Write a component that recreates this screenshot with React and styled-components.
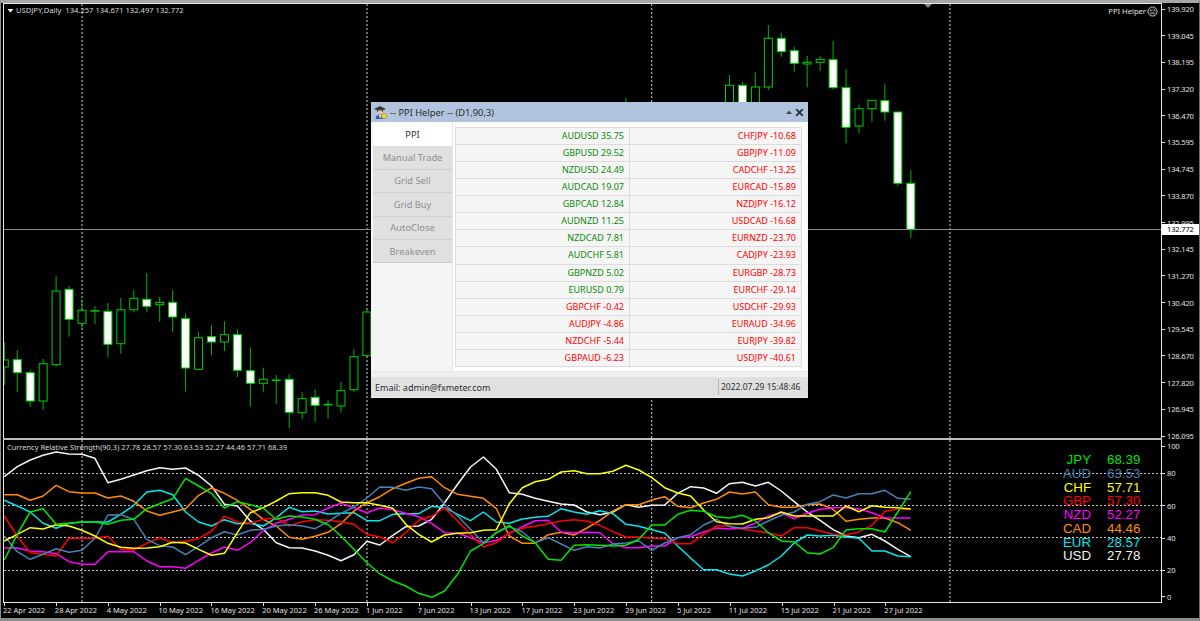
import React from "react";
import styled, { createGlobalStyle } from "styled-components";

const Global = createGlobalStyle`
  html, body { margin: 0; padding: 0; background: #000; }
  #root { width: 1200px; height: 621px; overflow: hidden; }
`;

const SMALL_FONT = `"Noto Sans", "Liberation Sans", sans-serif`;

const Terminal = styled.div`
  position: relative;
  width: 1200px;
  height: 621px;
  box-sizing: border-box;
  background: #000;
  border-top: 3px solid #a6a6a6;
  border-bottom: 3px solid #8c8c8c;
  border-left: 1px solid #8c8c8c;
  border-right: 1px solid #6e6e6e;
  padding: 1px 0 0 2px;
  display: flex;
  flex-direction: column;
  font-family: ${SMALL_FONT};
  color: #d8d8d8;
`;
const MainPane = styled.div`
  display: flex;
  height: 434px;
  flex: none;
`;
const Plot = styled.div`
  position: relative;
  width: 1157px;
  flex: none;
  box-sizing: content-box;
  border-left: 1px solid #e8e8e8;
  border-right: 1px solid #e8e8e8;
  border-top: 1px solid #e8e8e8;
  margin-top: -1px;
  overflow: hidden;
  & > svg { display: block; width: 100%; height: 100%; }
`;
const PriceAxis = styled.div`
  flex: 1;
  display: flex;
  flex-direction: column;
  justify-content: space-between;
  margin: 0 0 -3px 0;
  position: relative;
`;
const AxisLabel = styled.div`
  display: flex;
  align-items: center;
  height: 10px;
  font-size: 7.6px;
  letter-spacing: -0.2px;
  line-height: 10px;
  color: #e0e0e0;
  white-space: nowrap;
  &::before {
    content: "";
    width: 3px;
    height: 1px;
    background: #e0e0e0;
    margin-right: 2px;
    flex: none;
  }
`;
const PriceBadge = styled.div`
  position: absolute;
  left: 0;
  top: 220px;
  width: 37px;
  height: 11px;
  padding-left: 5px;
  box-sizing: border-box;
  background: #fff;
  color: #000;
  font-size: 7.6px;
  letter-spacing: -0.2px;
  line-height: 11px;
`;
const ChartCaption = styled.div`
  position: absolute;
  left: 3px;
  top: 1px;
  font-size: 7.6px;
  line-height: 11px;
  color: #d8d8d8;
  white-space: pre;
  display: flex;
  align-items: center;
  gap: 2px;
`;
const SubCaption = styled(ChartCaption)`
  left: 3px;
  top: 2px;
  font-size: 7.45px;
`;
const Badge = styled.div`
  position: absolute;
  right: 3px;
  top: 2px;
  display: flex;
  align-items: center;
  gap: 1px;
  font-size: 7.6px;
  line-height: 11px;
  color: #e0e0e0;
`;
const ShiftMark = styled.div`
  position: absolute;
  left: 920px;
  top: 0;
  width: 0;
  height: 0;
  border-left: 4px solid transparent;
  border-right: 4px solid transparent;
  border-top: 4px solid #7d8a99;
`;
const PaneGap = styled.div`
  height: 2px;
  flex: none;
  background: #bdbdbd;
  margin-right: 37px;
`;
const SubPane = styled.div`
  display: flex;
  height: 163px;
  flex: none;
`;
const SubPlot = styled(Plot)`
  border-top: none;
  border-bottom: 1px solid #e8e8e8;
  margin-top: 0;
  height: 162px;
`;
const SubAxis = styled.div`
  flex: 1;
  display: flex;
  flex-direction: column;
`;
const SubLabel = styled(AxisLabel)`
  margin-top: ${(p) => p.$gap}px;
`;
const TimeAxis = styled.div`
  display: grid;
  grid-template-columns: repeat(18, 51.85px);
`;
const TimeLabel = styled.div`
  font-size: 7.5px;
  line-height: 9px;
  color: #e0e0e0;
  white-space: nowrap;
  &::before {
    content: "";
    display: block;
    width: 1px;
    height: 3px;
    background: #e0e0e0;
    margin-left: 1px;
  }
`;
const Legend = styled.div`
  position: absolute;
  left: 1051px;
  top: 13px;
  display: grid;
  grid-template-columns: 36px 50px;
  column-gap: 16px;
  grid-auto-rows: 13.75px;
  font-family: "Liberation Sans", Arial, sans-serif;
  font-size: 13.3px;
  line-height: 13.75px;
`;
const LegendName = styled.span`
  text-align: right;
  color: ${(p) => p.$color};
`;
const LegendValue = styled.span`
  color: ${(p) => p.$color};
`;

const Dialog = styled.div`
  position: absolute;
  left: 370px;
  top: 99px;
  width: 437px;
  height: 296px;
  box-sizing: border-box;
  background: #f0f0f0;
  display: flex;
  flex-direction: column;
  color: #333;
  font-size: 9px;
`;
const TitleBar = styled.div`
  flex: none;
  height: 20px;
  background: #b0c4de;
  display: flex;
  align-items: center;
  padding: 0 4px 0 2px;
  gap: 2px;
  font-size: 9.3px;
  color: #2b2b2b;
`;
const TitleText = styled.span`
  flex: 1;
  white-space: nowrap;
`;
const DialogBody = styled.div`
  flex: none;
  height: 250px;
  display: flex;
  padding: 0 2px;
  background: #f5f5f5;
  border-bottom: 1px solid #e6e6e6;
  box-sizing: border-box;
`;
const TabList = styled.div`
  width: 79px;
  flex: none;
  display: flex;
  flex-direction: column;
  padding-top: 1px;
  background: #f5f5f5;
`;
const Tab = styled.div`
  height: 23.4px;
  flex: none;
  box-sizing: border-box;
  display: flex;
  align-items: center;
  justify-content: center;
  background: ${(p) => (p.$active ? "#fff" : "#e0e0e0")};
  color: ${(p) => (p.$active ? "#333" : "#8e8e8e")};
  border-bottom: 1px solid ${(p) => (p.$active ? "#fff" : "#cfcfcf")};
  font-size: 9.3px;
`;
const TabPanel = styled.div`
  flex: 1;
  background: #fff;
  padding: 5px 5px 5px 2px;
  border-left: 1px solid #e4e4e4;
`;
const PairTable = styled.div`
  display: grid;
  grid-template-columns: 174px 172px;
  grid-auto-rows: 17.07px;
  background: #f5f5f5;
  border-top: 1px solid #dcdcdc;
  border-left: 1px solid #dcdcdc;
`;
const PairCell = styled.div`
  box-sizing: border-box;
  text-align: right;
  padding-right: 5px;
  line-height: 16px;
  font-size: 9px;
  border-right: 1px solid #dcdcdc;
  border-bottom: 1px solid #dcdcdc;
  color: ${(p) => (p.$up ? "#0a8a0a" : "#ff0000")};
`;
const StatusBar = styled.div`
  margin-top: 5px;
  flex: none;
  height: 20px;
  background: #e0e0e0;
  display: flex;
  align-items: center;
  font-size: 9px;
  color: #2e2e2e;
`;
const StatusEmail = styled.span`
  flex: 1;
  padding-left: 4px;
`;
const StatusClock = styled.span`
  width: 90px;
  box-sizing: border-box;
  padding-left: 2px;
  font-size: 8.5px;
  border-left: 1px solid #b8b8b8;
  line-height: 16px;
`;

const CANDLE_X = (i) => 4.3 + 12.95 * i;
/* index, wickTop, wickBottom, bodyTop, bodyBottom, filled */
const CANDLES = [
  [0,342,385,360,367,0],[1,350,392,359.7,372.7,1],[2,370,407,372.7,401,1],[3,359,410,363.7,401,0],
  [4,276,366.7,291,364.7,0],[5,286,336.7,289.3,319.3,1],[6,300,327.7,310.3,323.3,0],[7,306,324.3,310.7,310.7,0],
  [8,303,357.3,311.3,344.3,1],[9,298,353.7,309.7,343.7,0],[10,290,312.3,298.3,309.7,0],[11,273,312.3,299.3,306.3,1],
  [12,297,321.7,302.3,304.7,0],[13,290,332.3,302.3,317,1],[14,313.3,391.7,318.7,368,1],[15,332,369.3,337.7,369.3,0],
  [16,325.7,355.3,336.7,342,1],[17,321.3,351,334.7,342,0],[18,329,377,334.7,370.3,1],[19,347.3,406.7,370.7,383.3,1],
  [20,367.7,391.7,379.3,383.3,0],[21,375,403.7,380,380,0],[22,374.3,428.3,379.3,412.3,1],[23,392,419.3,398.7,412.7,0],
  [24,389.3,421.7,397.3,405.3,1],[25,400,418.3,404.3,404.3,0],[26,382,412.7,390.7,406,0],[27,349,391.7,356.7,389.7,0],
  [28,310,356.7,312,355.7,0],
  [48,98,130],
  [56,75,130,85.3,130,0],[57,81.7,130,85.3,130,1],[58,72.3,130,87,130,0],[59,25,90,38.3,87,0],[60,33.3,56.7,38.3,51.7,1],
  [61,46.7,71.7,50.7,63.3,1],[62,56,87.3,62.3,64,0],[63,56,71,59.3,62.3,0],[64,40.7,89.3,59.7,87.7,1],[65,69,143.3,87.7,127.3,1],
  [66,105,133.3,108.7,126,0],[67,100,121.7,100.3,108.7,0],[68,84,120.7,100.7,112,1],[69,111.7,186,112,183.3,1],[70,170,238,183.3,229.3,1],
];

const SERIES = [
  { name: "white", color: "#f4f4f4", z: [
    [122,92,72,58,48,54,55,67,140,130,117,104,95,100,96,118,150,205,210,255,280,320,335,336,345,358,374,356,316,327,298],
    [272,270,250,200,145,93,63,100,170,175,187,196,204,207,228,236,228,206,214,208,207,172,152,156,172,143,139,150,139,165,197],
    [228,253,281,300,305,295,315,340,362]] },
  { name: "cyan", color: "#00e8f0", z: [
    [193,210,228,262,277,262,258,258,258,235,208,168,163,176,228,258,270,251,263,262,270,245,214,227,225,234,232,230,254,254,235],
    [233,233,211,215,235,254,228,258,262,249,244,241,218,228,235,224,233,265,271,281,291,330,366,401,401,414,420,405,387,360,321],
    [297,300,298,303,307,345,345,360,362]] },
  { name: "orange", color: "#ff8c00", z: [
    [176,176,193,180,148,167,171,171,186,180,196,225,238,228,218,178,156,172,193,220,250,270,304,310,301,289,263,225,200,182,158],
    [142,127,122,155,175,181,187,218,300,322,322,296,289,297,276,253,225,206,206,192,182,211,215,201,190,168,174,168,206,214,214],
    [206,204,220,256,250,246,246,260,283]] },
  { name: "magenta", color: "#ff00ff", z: [
    [336,336,345,347,353,377,385,385,347,347,347,375,392,392,397,373,351,333,343,320,283,262,250,237,236,216,202,215,230,216,221],
    [232,242,262,290,291,305,321,313,293,272,254,253,288,290,289,290,323,335,335,330,330,305,302,288,276,279,277,262,240,230,248],
    [232,220,215,215,218,230,245,246,246]] },
  { name: "red", color: "#ff0000", z: [
    [240,300,350,355,360,307,307,307,301,340,342,322,305,320,316,308,285,241,258,262,250,245,270,257,251,253,258,265,295,303,320],
    [290,253,241,215,255,295,333,320,290,277,271,263,255,251,256,268,287,303,303,307,307,323,323,295,270,270,280,285,290,300,275],
    [275,285,295,296,287,268,226,220,220]] },
  { name: "blue", color: "#4682b4", z: [
    [300,347,370,355,338,349,343,307,237,236,250,310,329,333,356,331,305,287,297,283,280,270,266,270,278,257,232,213,186,153,154],
    [163,153,158,205,240,280,320,290,272,287,320,305,324,343,332,336,324,321,315,343,321,305,296,267,250,272,277,274,255,238,228],
    [205,197,177,186,173,173,163,187,190]] },
  { name: "yellow", color: "#ffff00", z: [
    [315,295,275,279,266,270,283,300,322,334,337,336,332,319,321,340,358,352,290,230,215,195,173,170,170,178,198,200,200,208,217],
    [265,295,318,297,292,290,283,281,203,155,137,130,108,104,113,113,106,88,102,125,155,171,180,222,257,263,264,250,245,228,240],
    [240,240,240,210,227,209,214,215,219]] },
  { name: "green", color: "#00e600", z: [
    [372,295,228,218,265,262,258,258,265,253,250,218,203,188,127,150,172,216,197,206,217,250,240,243,250,266,300,340,380,413,435],
    [450,472,484,465,415,345,323,290,268,300,320,370,373,328,326,328,330,328,310,267,267,235,223,226,242,246,238,255,290,315,318],
    [350,354,335,282,278,278,288,228,167]] },
];

const seriesPoints = (parts) =>
  parts.flat().map((z, i) => `${CANDLE_X(i).toFixed(1)},${(436 + z / 3).toFixed(1)}`).join(" ");

const GRID_X = [82, 367, 651.7, 950];

const MainChart = () => (
  <svg viewBox="4 4 1157 434">
    {GRID_X.map((x) => (
      <line key={x} x1={x} x2={x} y1={4} y2={438} stroke="#d0d0d0" strokeDasharray="2 2" />
    ))}
    <line x1={4} x2={1162} y1={229.5} y2={229.5} stroke="#8a8a8a" />
    {CANDLES.map(([i, wt, wb, bt, bb, filled]) => {
      const x = CANDLE_X(i);
      return (
        <g key={i}>
          <line x1={x} x2={x} y1={wt} y2={wb} stroke="#00b400" strokeWidth="1" />
          {bt !== undefined && (
            <rect x={x - 4} y={bt} width={8} height={Math.max(bb - bt, 0.5)} fill={filled ? "#fff" : "#000"} stroke="#00d000" strokeWidth="1" />
          )}
        </g>
      );
    })}
  </svg>
);

const SubChart = () => (
  <svg viewBox="4 440 1157 162">
    {[473.5, 505.5, 537.5, 570.5].map((y) => (
      <line key={y} x1={4} x2={1162} y1={y} y2={y} stroke="#c8c8c8" strokeDasharray="2 2" />
    ))}
    {GRID_X.map((x) => (
      <line key={x} x1={x} x2={x} y1={440} y2={602} stroke="#d8d8d8" strokeDasharray="2 2" />
    ))}
    {SERIES.map((s) => (
      <polyline key={s.name} points={seriesPoints(s.z)} fill="none" stroke={s.color} strokeWidth="1.5" strokeLinejoin="round" />
    ))}
  </svg>
);

const WizardIcon = () => (
  <svg width="15" height="16" viewBox="0 0 15 16">
    <path d="M1 5 L7 2 L13 5 L7 7.5 Z" fill="#3a3a3a" />
    <path d="M4 6 L10 6 L10 8 L4 8 Z" fill="#555" />
    <circle cx="7" cy="8.5" r="2.3" fill="#e8c89a" />
    <path d="M2.5 15 Q3 10.5 7 10.5 Q10.5 10.5 11 15 Z" fill="#2f5fb0" />
    <circle cx="11" cy="12" r="2.6" fill="#f2d23c" stroke="#a88a10" strokeWidth="0.6" />
    <path d="M6 11 L7 15 L8 11 Z" fill="#fff" />
  </svg>
);

const CollapseIcon = () => (
  <svg width="8" height="8" viewBox="0 0 8 8">
    <path d="M1 6 L4 2.5 L7 6 Z" fill="#3f4a55" />
  </svg>
);

const CloseIcon = () => (
  <svg width="9" height="9" viewBox="0 0 9 9">
    <path d="M1.2 1.2 L7.8 7.8 M7.8 1.2 L1.2 7.8" stroke="#2d3238" strokeWidth="1.9" />
  </svg>
);

const Smiley = () => (
  <svg width="11" height="11" viewBox="0 0 11 11">
    <circle cx="5.5" cy="5.5" r="4.6" fill="#222" stroke="#cfcfcf" strokeWidth="0.9" />
    <circle cx="3.8" cy="4.3" r="0.7" fill="#cfcfcf" />
    <circle cx="7.2" cy="4.3" r="0.7" fill="#cfcfcf" />
    <path d="M3.3 7.4 Q5.5 6.2 7.7 7.4" fill="none" stroke="#cfcfcf" strokeWidth="0.8" />
  </svg>
);

const CaretIcon = () => (
  <svg width="7" height="5" viewBox="0 0 7 5">
    <path d="M0.5 1 L6.5 1 L3.5 4.5 Z" fill="#fff" />
  </svg>
);

const PRICES = ["139.920","139.045","138.195","137.320","136.470","135.595","134.745","133.870","132.995","132.145","131.270","130.420","129.545","128.670","127.820","126.945","126.095"];
const TIMES = ["22 Apr 2022","28 Apr 2022","4 May 2022","10 May 2022","16 May 2022","20 May 2022","26 May 2022","1 Jun 2022","7 Jun 2022","13 Jun 2022","17 Jun 2022","23 Jun 2022","29 Jun 2022","5 Jul 2022","11 Jul 2022","15 Jul 2022","21 Jul 2022","27 Jul 2022"];
const SUB_TICKS = [["100",1],["80",17],["60",22.5],["40",22.5],["20",22.3],["0",16.7]];
const TABS = ["PPI","Manual Trade","Grid Sell","Grid Buy","AutoClose","Breakeven"];
const LEFT_PAIRS = ["AUDUSD 35.75","GBPUSD 29.52","NZDUSD 24.49","AUDCAD 19.07","GBPCAD 12.84","AUDNZD 11.25","NZDCAD 7.81","AUDCHF 5.81","GBPNZD 5.02","EURUSD 0.79","GBPCHF -0.42","AUDJPY -4.86","NZDCHF -5.44","GBPAUD -6.23"];
const RIGHT_PAIRS = ["CHFJPY -10.68","GBPJPY -11.09","CADCHF -13.25","EURCAD -15.89","NZDJPY -16.12","USDCAD -16.68","EURNZD -23.70","CADJPY -23.93","EURGBP -28.73","EURCHF -29.14","USDCHF -29.93","EURAUD -34.96","EURJPY -39.82","USDJPY -40.61"];
const STRENGTH = [["JPY","68.39","#00e600"],["AUD","63.53","#4682b4"],["CHF","57.71","#ffff00"],["GBP","57.30","#ff0000"],["NZD","52.27","#ff00ff"],["CAD","44.46","#ff8c00"],["EUR","28.57","#00e8f0"],["USD","27.78","#f4f4f4"]];

export default function App() {
  return (
    <>
      <Global />
      <Terminal>
        <MainPane>
          <Plot>
            <MainChart />
            <ChartCaption>
              <CaretIcon />
              {"USDJPY,Daily  134.257 134.671 132.497 132.772"}
            </ChartCaption>
            <Badge>PPI Helper<Smiley /></Badge>
            <ShiftMark />
          </Plot>
          <PriceAxis>
            {PRICES.map((p) => <AxisLabel key={p}>{p}</AxisLabel>)}
            <PriceBadge>132.772</PriceBadge>
          </PriceAxis>
        </MainPane>
        <PaneGap />
        <SubPane>
          <SubPlot>
            <SubChart />
            <SubCaption>{"Currency Relative Strength(90,3) 27.78 28.57 57.30 63.53 52.27 44.46 57.71 68.39"}</SubCaption>
            <Legend>
              {STRENGTH.map(([n, v, c]) => (
                <React.Fragment key={n}>
                  <LegendName $color={c}>{n}</LegendName>
                  <LegendValue $color={c}>{v}</LegendValue>
                </React.Fragment>
              ))}
            </Legend>
          </SubPlot>
          <SubAxis>
            {SUB_TICKS.map(([t, g]) => <SubLabel key={t} $gap={g}>{t}</SubLabel>)}
          </SubAxis>
        </SubPane>
        <TimeAxis>
          {TIMES.map((t) => <TimeLabel key={t}>{t}</TimeLabel>)}
        </TimeAxis>
        <Dialog>
          <TitleBar>
            <WizardIcon />
            <TitleText>-- PPI Helper -- (D1,90,3)</TitleText>
            <CollapseIcon />
            <CloseIcon />
          </TitleBar>
          <DialogBody>
            <TabList>
              {TABS.map((t, i) => <Tab key={t} $active={i === 0}>{t}</Tab>)}
            </TabList>
            <TabPanel>
              <PairTable>
                {LEFT_PAIRS.map((l, i) => (
                  <React.Fragment key={l}>
                    <PairCell $up={!l.includes("-")}>{l}</PairCell>
                    <PairCell>{RIGHT_PAIRS[i]}</PairCell>
                  </React.Fragment>
                ))}
              </PairTable>
            </TabPanel>
          </DialogBody>
          <StatusBar>
            <StatusEmail>Email: admin@fxmeter.com</StatusEmail>
            <StatusClock>2022.07.29 15:48:46</StatusClock>
          </StatusBar>
        </Dialog>
      </Terminal>
    </>
  );
}
